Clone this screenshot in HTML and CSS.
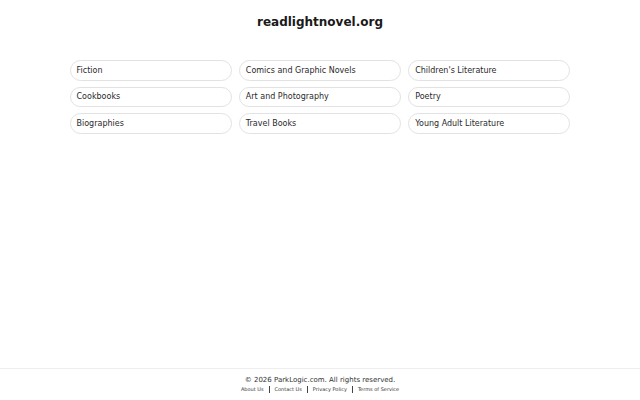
FILE: index.html
```html
<!DOCTYPE html>
<html>
<head>
<meta charset="utf-8">
<link rel="stylesheet" href="styles.css">
</head>
<body>
<div class="page">
  <header class="header">
    <h1 class="title">readlightnovel.org</h1>
  </header>
  <main class="main">
    <div class="grid">
      <a class="pill">Fiction</a>
      <a class="pill">Comics and Graphic Novels</a>
      <a class="pill">Children's Literature</a>
      <a class="pill">Cookbooks</a>
      <a class="pill">Art and Photography</a>
      <a class="pill">Poetry</a>
      <a class="pill">Biographies</a>
      <a class="pill">Travel Books</a>
      <a class="pill">Young Adult Literature</a>
    </div>
  </main>
  <footer class="footer">
    <div class="copy">© 2026 ParkLogic.com. All rights reserved.</div>
    <div class="links">
      <a class="link">About Us</a><span class="sep"></span><a class="link">Contact Us</a><span class="sep"></span><a class="link">Privacy Policy</a><span class="sep"></span><a class="link">Terms of Service</a>
    </div>
  </footer>
</div>
</body>
</html>
```
FILE: styles.css
```css
html, body {
  margin: 0;
  padding: 0;
  background: #ffffff;
}
body {
  font-family: "DejaVu Sans", sans-serif;
  color: #222;
}
.page {
  height: 400px;
  display: flex;
  flex-direction: column;
}
.header {
  display: flex;
  justify-content: center;
  padding-top: 14px;
}
.title {
  margin: 0;
  font-size: 12px;
  font-weight: bold;
  line-height: 16px;
  color: #1a1a1a;
}
.main {
  flex: 1;
  display: flex;
  justify-content: center;
  padding-top: 30px;
}
.grid {
  width: 501px;
  display: grid;
  grid-template-columns: repeat(3, 1fr);
  column-gap: 7px;
  row-gap: 6px;
  align-content: start;
}
.pill {
  display: flex;
  align-items: center;
  height: 18.5px;
  border: 1px solid #e2e2e2;
  border-radius: 11px;
  padding-left: 6px;
  font-size: 8px;
  color: #2a2a2a;
}
.footer {
  border-top: 1px solid #eeeeee;
  padding: 7px 0 7px;
  display: flex;
  flex-direction: column;
  align-items: center;
}
.copy {
  font-size: 7px;
  line-height: 8px;
  color: #333;
}
.links {
  display: flex;
  align-items: center;
  margin-top: 1px;
}
.link {
  font-size: 5px;
  line-height: 8px;
  color: #333;
}
.sep {
  width: 1px;
  height: 7px;
  background: #444;
  margin: 0 5px;
}
```
